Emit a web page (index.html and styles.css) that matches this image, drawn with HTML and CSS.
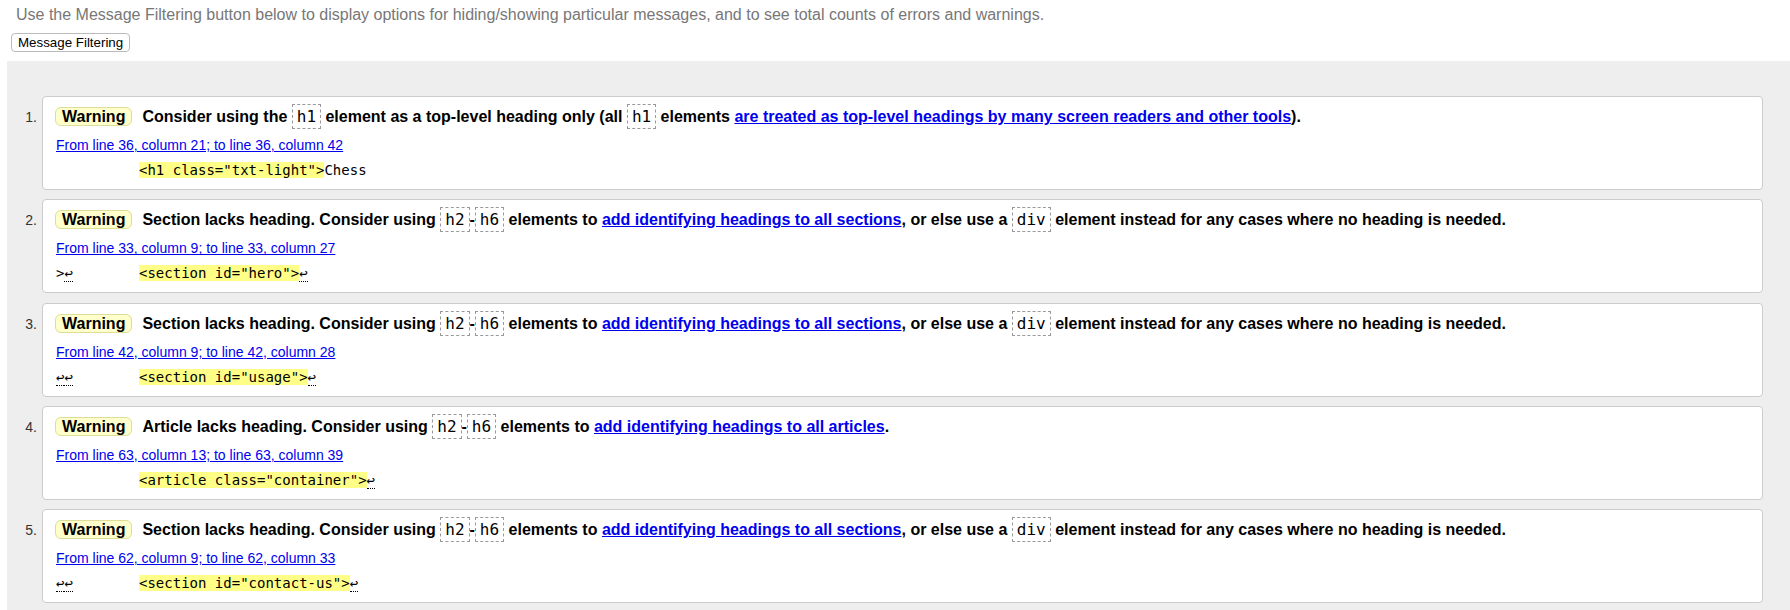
FILE: index.html
```html
<!DOCTYPE html>
<html lang="en">
<head>
<meta charset="utf-8">
<title>Nu Html Checker results</title>
<link rel="stylesheet" href="styles.css">
</head>
<body>
<p class="intro">Use the Message Filtering button below to display options for hiding/showing particular messages, and to see total counts of errors and warnings.</p>
<div class="toolbar"><button class="filter-btn" type="button">Message Filtering</button></div>
<ol class="results">
  <li class="item">
    <span class="num">1.</span>
    <div class="card">
      <p class="msg"><span class="badge">Warning</span>Consider using the <code class="c">h1</code> element as a top-level heading only (all <code class="c">h1</code> elements <a href="#">are treated as top-level headings by many screen readers and other tools</a>).</p>
      <p class="loc"><a href="#">From line 36, column 21; to line 36, column 42</a></p>
      <p class="extract"><code class="x"><span class="pre"></span><b class="hl">&lt;h1 class="txt-light"&gt;</b>Chess</code></p>
    </div>
  </li>
  <li class="item">
    <span class="num">2.</span>
    <div class="card">
      <p class="msg"><span class="badge">Warning</span>Section lacks heading. Consider using <code class="c">h2</code>-<code class="c">h6</code> elements to <a href="#">add identifying headings to all sections</a>, or else use a <code class="c">div</code> element instead for any cases where no heading is needed.</p>
      <p class="loc"><a href="#">From line 33, column 9; to line 33, column 27</a></p>
      <p class="extract"><code class="x"><span class="pre">&gt;<span class="lf">↩</span></span><b class="hl">&lt;section id="hero"&gt;</b><span class="lf">↩</span></code></p>
    </div>
  </li>
  <li class="item">
    <span class="num">3.</span>
    <div class="card">
      <p class="msg"><span class="badge">Warning</span>Section lacks heading. Consider using <code class="c">h2</code>-<code class="c">h6</code> elements to <a href="#">add identifying headings to all sections</a>, or else use a <code class="c">div</code> element instead for any cases where no heading is needed.</p>
      <p class="loc"><a href="#">From line 42, column 9; to line 42, column 28</a></p>
      <p class="extract"><code class="x"><span class="pre"><span class="lf">↩</span><span class="lf">↩</span></span><b class="hl">&lt;section id="usage"&gt;</b><span class="lf">↩</span></code></p>
    </div>
  </li>
  <li class="item">
    <span class="num">4.</span>
    <div class="card">
      <p class="msg"><span class="badge">Warning</span>Article lacks heading. Consider using <code class="c">h2</code>-<code class="c">h6</code> elements to <a href="#">add identifying headings to all articles</a>.</p>
      <p class="loc"><a href="#">From line 63, column 13; to line 63, column 39</a></p>
      <p class="extract"><code class="x"><span class="pre"></span><b class="hl">&lt;article class="container"&gt;</b><span class="lf">↩</span></code></p>
    </div>
  </li>
  <li class="item">
    <span class="num">5.</span>
    <div class="card">
      <p class="msg"><span class="badge">Warning</span>Section lacks heading. Consider using <code class="c">h2</code>-<code class="c">h6</code> elements to <a href="#">add identifying headings to all sections</a>, or else use a <code class="c">div</code> element instead for any cases where no heading is needed.</p>
      <p class="loc"><a href="#">From line 62, column 9; to line 62, column 33</a></p>
      <p class="extract"><code class="x"><span class="pre"><span class="lf">↩</span><span class="lf">↩</span></span><b class="hl">&lt;section id="contact-us"&gt;</b><span class="lf">↩</span></code></p>
    </div>
  </li>
</ol>
</body>
</html>
```

FILE: styles.css
```css
html, body {
  margin: 0;
  padding: 0;
}
html {
  overflow: hidden;
}
body {
  font-family: "Liberation Sans", Arial, sans-serif;
  font-size: 16px;
  color: #000;
  background: #fff;
}
.intro {
  margin: 0;
  padding: 6px 0 0 16px;
  line-height: 18px;
  color: #777;
}
.toolbar {
  display: flex;
  padding: 9px 0 0 11px;
}
.filter-btn {
  height: 19px;
  box-sizing: border-box;
  padding: 0 6px;
  margin: 0;
  font-family: "Liberation Sans", Arial, sans-serif;
  font-size: 13.33px;
  line-height: 15px;
  color: #000;
  background: #fff;
  border: 1px solid #bbb;
  border-radius: 4px;
}
.results {
  list-style: none;
  margin: 9px 0 0 7px;
  padding: 35px 27px 7px 0;
  background: #eee;
  display: flex;
  flex-direction: column;
  gap: 9.3px;
}
.item {
  display: flex;
  align-items: baseline;
}
.num {
  flex: none;
  width: 35px;
  box-sizing: border-box;
  padding-right: 5px;
  text-align: right;
  font-size: 14px;
  color: #333;
}
.card {
  flex: 1;
  min-width: 0;
  background: #fff;
  border: 1px solid #ccc;
  border-radius: 4px;
  padding: 8px 12px 10px 12px;
}
.msg {
  margin: 0;
  line-height: 24px;
  font-weight: bold;
  white-space: nowrap;
}
.msg a {
  color: #00e;
}
.badge {
  background: #ffc;
  border: 1px solid #dd9;
  border-radius: 6px;
  padding: 0 6px;
  margin-right: 10px;
}
.c {
  font-family: "DejaVu Sans Mono", monospace;
  font-size: 16px;
  font-weight: normal;
  border: 1px dashed #999;
  padding: 2px 4px;
}
.loc {
  margin: 6px 0 0 1px;
  font-size: 14px;
  line-height: 20px;
}
.loc a {
  color: #00e;
}
.extract {
  margin: 6px 0 0 1px;
  line-height: 18px;
  white-space: pre;
}
.x {
  font-family: "DejaVu Sans Mono", monospace;
  font-size: 14px;
}
.pre {
  display: inline-block;
  width: 83px;
}
.hl {
  font-weight: normal;
  background: #ff8;
}
.lf {
  border-bottom: 1px dotted #000;
}
```
